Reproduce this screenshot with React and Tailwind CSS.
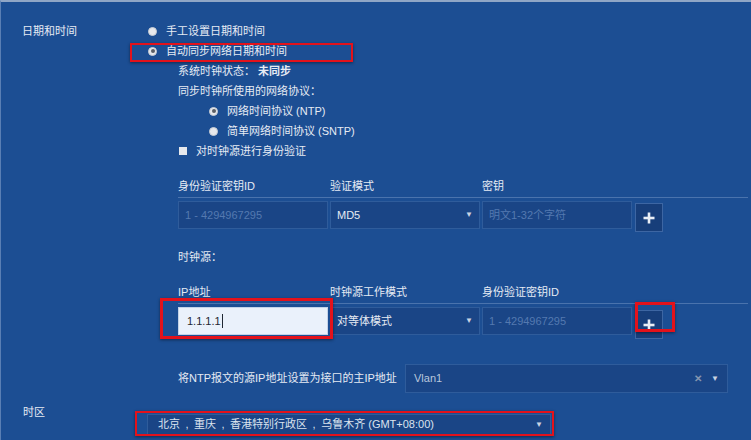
import React from "react";

const font = { fontFamily: '"Liberation Sans", "Noto Sans CJK SC", sans-serif' };

function Radio({ checked }) {
  return (
    <span className="flex h-[9px] w-[9px] shrink-0 items-center justify-center rounded-full border border-[#c9ced6] bg-[#e6e8ec]">
      {checked ? <span className="h-[4px] w-[4px] rounded-full bg-[#5b5f66]" /> : null}
    </span>
  );
}

function Arrow() {
  return <span className="text-[8px] leading-none text-[#c9d3e2]">▼</span>;
}

function PlusBtn({ extra }) {
  return (
    <div className={"flex h-[29px] w-[28px] shrink-0 items-center justify-center border border-[#3d66a3] bg-[#173e7a] " + (extra || "")}>
      <svg width="12" height="12" viewBox="0 0 12 12">
        <rect x="4.7" y="0.5" width="2.6" height="11" fill="#e9eef6" />
        <rect x="0.5" y="4.7" width="11" height="2.6" fill="#e9eef6" />
      </svg>
    </div>
  );
}

function DarkInput({ children, placeholder, select }) {
  return (
    <div className="flex h-[28px] w-[150px] shrink-0 items-center justify-between border border-[#2f5c9b] bg-[#1a4586] px-[6px]">
      <span className={placeholder ? "text-[#5479b0]" : "text-[#e6ebf3]"}>{children}</span>
      {select ? <Arrow /> : null}
    </div>
  );
}

export default function App() {
  return (
    <div
      className="relative h-[440px] w-[751px] overflow-hidden border-l border-t-2 border-l-[#5a7fb4] border-t-[#8fa6c6] bg-[#1c4e93] text-[11px] text-[#e6ebf3]"
      style={font}
    >
      {/* Date & time section */}
      <div className="flex pt-[19px]">
        <div className="w-[147px] shrink-0 pl-[21px]">
          <div className="flex h-5 items-center">日期和时间</div>
        </div>
        <div className="flex flex-col">
          <div className="flex h-5 items-center gap-[9px]">
            <Radio />
            <span>手工设置日期和时间</span>
          </div>
          <div className="relative flex h-5 items-center gap-[9px]">
            <Radio checked />
            <span>自动同步网络日期和时间</span>
            <div className="absolute left-[-18px] top-[2px] h-[19px] w-[223px] border-2 border-[#e3121b] shadow-[0_1px_3px_rgba(0,0,0,0.45)]" />
          </div>
          <div className="flex h-5 items-center pl-[30px]">
            系统时钟状态：&nbsp;<span className="font-bold">未同步</span>
          </div>
          <div className="flex h-5 items-center pl-[30px]">同步时钟所使用的网络协议：</div>
          <div className="flex h-5 items-center gap-[9px] pl-[61px]">
            <Radio checked />
            <span>网络时间协议 (NTP)</span>
          </div>
          <div className="flex h-5 items-center gap-[9px] pl-[61px]">
            <Radio />
            <span>简单网络时间协议 (SNTP)</span>
          </div>
          <div className="flex h-5 items-center gap-[9px] pl-[31px]">
            <span className="h-[8px] w-[8px] bg-[#e6e8ec]" />
            <span>对时钟源进行身份验证</span>
          </div>

          {/* Auth table */}
          <div className="ml-[30px] mt-[14px] w-[570px]">
            <div className="flex h-[23px] items-center border-b border-[#4a73ad]">
              <span className="w-[152px]">身份验证密钥ID</span>
              <span className="w-[152px]">验证模式</span>
              <span className="w-[152px]">密钥</span>
            </div>
            <div className="mt-[3px] flex items-start gap-[2px]">
              <DarkInput placeholder>1 - 4294967295</DarkInput>
              <DarkInput select>MD5</DarkInput>
              <DarkInput placeholder>明文1-32个字符</DarkInput>
              <PlusBtn extra="ml-[1px] mt-[2px]" />
            </div>
          </div>

          <div className="ml-[30px] mt-[15px] flex h-5 items-center">时钟源：</div>

          {/* Clock source table */}
          <div className="ml-[30px] mt-[14px] w-[570px]">
            <div className="flex h-[23px] items-center border-b border-[#4a73ad]">
              <span className="w-[152px]">IP地址</span>
              <span className="w-[152px]">时钟源工作模式</span>
              <span className="w-[152px]">身份验证密钥ID</span>
            </div>
            <div className="mt-[3px] flex items-start gap-[2px]">
              <div className="relative">
                <div className="flex h-[28px] w-[150px] items-center border border-[#c3d2e8] bg-[#eaf1fb] px-[8px] text-[#1f2733]">
                  1.1.1.1<span className="ml-[1px] h-[14px] w-px bg-[#1f2733]" />
                </div>
                <div className="absolute left-[-18px] top-[-9px] h-[41px] w-[173px] border-[3px] border-[#e3121b] shadow-[0_1px_3px_rgba(0,0,0,0.45)]" />
              </div>
              <DarkInput select>对等体模式</DarkInput>
              <DarkInput placeholder>1 - 4294967295</DarkInput>
              <div className="relative ml-[1px] mt-[3px]">
                <PlusBtn />
                <div className="absolute left-0 top-[-8px] h-[30px] w-[40px] border-[3px] border-[#e3121b] shadow-[0_1px_3px_rgba(0,0,0,0.45)]" />
              </div>
            </div>
          </div>

          {/* NTP source interface */}
          <div className="ml-[30px] mt-[25px] flex items-center">
            <span className="w-[227px] shrink-0">将NTP报文的源IP地址设置为接口的主IP地址</span>
            <div className="flex h-[29px] w-[323px] items-center justify-between border border-[#2f5c9b] bg-[#1a4586] pl-[8px] pr-[8px]">
              <span className="text-[#b9c7dc]">Vlan1</span>
              <span className="flex items-center gap-[9px]">
                <span className="text-[10px] font-bold text-[#8596b0]">✕</span>
                <Arrow />
              </span>
            </div>
          </div>
        </div>
      </div>

      {/* Time zone */}
      <div className="mt-[9px] flex">
        <div className="w-[146px] shrink-0 pl-[22px]">
          <div className="flex h-5 items-center">时区</div>
        </div>
        <div className="relative mt-[12px]">
          <div className="flex h-[21px] w-[404px] items-center justify-between border border-[#2f5c9b] bg-[#1a4586] pl-[10px] pr-[7px] text-[#dbe3ee]">
            <span className="whitespace-pre">{"北京\u2002,\u2002重庆\u2002,\u2002香港特别行政区\u2002,\u2002乌鲁木齐 (GMT+08:00)"}</span>
            <Arrow />
          </div>
          <div className="absolute left-[-12px] top-[-3px] h-[25px] w-[419px] border-2 border-[#e3121b] shadow-[0_1px_3px_rgba(0,0,0,0.45)]" />
        </div>
      </div>
    </div>
  );
}
